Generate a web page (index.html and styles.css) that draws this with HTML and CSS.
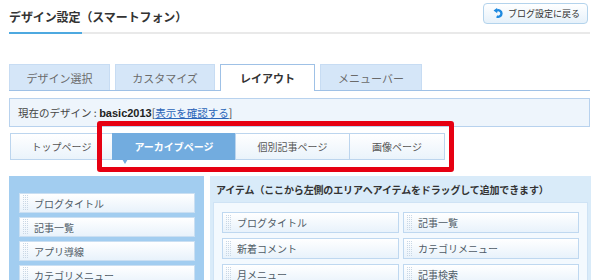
FILE: index.html
```html
<!DOCTYPE html>
<html lang="ja">
<head>
<meta charset="utf-8">
<title>デザイン設定（スマートフォン）</title>
<link rel="stylesheet" href="styles.css">
</head>
<body>
<div class="page">
  <header class="head">
    <h1 class="title">デザイン設定（スマートフォン）</h1>
    <a class="back-btn" href="#">
      <svg class="back-icon" viewBox="0 0 12 12" width="11" height="11" aria-hidden="true">
        <path d="M4 9.2 A3.6 3.6 0 1 0 4 2.8" fill="none" stroke="#1f8ae0" stroke-width="2.6"/>
        <path d="M0.6 2.8 L4.6 -0.2 L4.6 5.8 Z" fill="#1f8ae0"/>
      </svg>
      <span>ブログ設定に戻る</span>
    </a>
  </header>
  <div class="rule"><span class="rule-accent"></span></div>

  <nav class="tabs">
    <div class="tab tab-1">デザイン選択</div>
    <div class="tab tab-2">カスタマイズ</div>
    <div class="tab tab-3 is-active">レイアウト</div>
    <div class="tab tab-4">メニューバー</div>
  </nav>

  <div class="info">現在のデザイン<span class="info-colon"> : </span><b class="info-name">basic2013</b>[<a class="info-link" href="#">表示を確認する</a>]</div>

  <div class="subtabs">
    <div class="subtab sub-1">トップページ</div>
    <div class="subtab sub-2 is-active">アーカイブページ<span class="pointer"></span></div>
    <div class="subtab sub-3">個別記事ページ</div>
    <div class="subtab sub-4">画像ページ</div>
  </div>

  <div class="panels">
    <div class="left-panel">
      <div class="item"><span class="grip"></span>ブログタイトル</div>
      <div class="item"><span class="grip"></span>記事一覧</div>
      <div class="item"><span class="grip"></span>アプリ導線</div>
      <div class="item"><span class="grip"></span>カテゴリメニュー</div>
    </div>
    <div class="right-panel">
      <div class="rp-head">アイテム（ここから左側のエリアへアイテムをドラッグして追加できます）</div>
      <div class="rp-body">
        <div class="item item-r"><span class="grip"></span>ブログタイトル</div>
        <div class="item item-r"><span class="grip"></span>記事一覧</div>
        <div class="item item-r"><span class="grip"></span>新着コメント</div>
        <div class="item item-r"><span class="grip"></span>カテゴリメニュー</div>
        <div class="item item-r"><span class="grip"></span>月メニュー</div>
        <div class="item item-r"><span class="grip"></span>記事検索</div>
      </div>
    </div>
  </div>

  <div class="highlight"></div>
</div>
</body>
</html>
```

FILE: styles.css
```css
* { box-sizing: border-box; }

html, body {
  margin: 0;
  background: #fff;
}

body {
  font-family: "Noto Sans CJK JP", "Noto Sans", sans-serif;
  color: #333;
  overflow: hidden;
}

.page {
  position: relative;
  width: 600px;
  padding: 0 10px 0 9px;
}

/* header */
.head {
  display: flex;
  justify-content: space-between;
  align-items: flex-start;
  height: 32px;
}

.title {
  margin: 9px 0 0 0;
  font-size: 12px;
  line-height: 16px;
  font-weight: bold;
  color: #333;
  letter-spacing: -0.1px;
}

.back-btn {
  display: flex;
  align-items: center;
  gap: 4px;
  margin: 3px 2px 0 0;
  height: 21px;
  width: 105px;
  padding: 0 0 0 9px;
  border: 1px solid #b3d3ec;
  border-radius: 4px;
  background: linear-gradient(#ffffff, #e6f1fa);
  font-size: 9px;
  line-height: 12px;
  color: #333;
  text-decoration: none;
}

.back-icon { flex: none; }

.rule {
  height: 2px;
  background: #e9e9e9;
}

.rule-accent {
  display: block;
  width: 73px;
  height: 2px;
  background: #4ea9e0;
}

/* main tabs */
.tabs {
  display: flex;
  align-items: flex-end;
  gap: 5px;
  margin-top: 30px;
  height: 27px;
  border-bottom: 1px solid #9fc1e6;
}

.tab {
  height: 26px;
  display: flex;
  align-items: center;
  justify-content: center;
  font-size: 11px;
  line-height: 14px;
  color: #6a6a6a;
  background: #d5e6f8;
  border: 1px solid #c7dcf3;
  border-bottom: none;
}

.tab-1 { width: 101px; }
.tab-2 { width: 100px; }
.tab-3 { width: 95px; }
.tab-4 { width: 102px; }

.tab.is-active {
  height: 27px;
  margin-bottom: -1px;
  background: #fff;
  border-color: #9fc1e6;
  color: #333;
  font-weight: bold;
}

/* info */
.info {
  margin-top: 7px;
  height: 29px;
  display: flex;
  align-items: center;
  padding-left: 8px;
  background: #eef5fc;
  border: 1px solid #b8d2ee;
  font-size: 10.5px;
  line-height: 14px;
  color: #444;
  white-space: pre;
}

.info-name {
  font-family: "Liberation Sans", "Noto Sans CJK JP", sans-serif;
  font-weight: bold;
  color: #222;
  font-size: 11px;
}

.info-link {
  color: #2a64b8;
  text-decoration: underline;
}

/* sub tabs */
.subtabs {
  display: flex;
  margin-top: 6px;
  height: 27px;
}

.subtab {
  position: relative;
  height: 27px;
  display: flex;
  align-items: center;
  justify-content: center;
  font-size: 10px;
  line-height: 14px;
  color: #555;
  background: linear-gradient(#ffffff, #eaf3fb);
  border: 1px solid #bcd5ee;
  margin-left: -1px;
}

.sub-1 { width: 103px; margin-left: 1px; }
.sub-2 { width: 124px; }
.sub-3 { width: 115px; }
.sub-4 { width: 96px; }

.subtab.is-active {
  background: #72acdf;
  border-color: #72acdf;
  color: #fff;
  font-weight: bold;
}

.pointer {
  position: absolute;
  left: 9px;
  bottom: -5px;
  width: 0;
  height: 0;
  border-left: 3px solid transparent;
  border-right: 3px solid transparent;
  border-top: 5px solid #72acdf;
}

/* panels */
.panels {
  display: flex;
  gap: 6px;
  margin-top: 16px;
}

.left-panel {
  width: 195px;
  flex: none;
  height: 120px;
  background: #a2cdf0;
  padding: 17px 9px 0 10px;
  display: flex;
  flex-direction: column;
  gap: 4px;
}

.item {
  height: 20px;
  display: flex;
  align-items: center;
  padding-left: 2px;
  background: linear-gradient(#ffffff, #e8f2fb);
  border: 1px solid #cadff2;
  font-size: 10px;
  line-height: 13px;
  color: #4f5b66;
}

.grip {
  width: 6px;
  height: 16px;
  margin-right: 6px;
  flex: none;
  background-image: conic-gradient(#c9d7e5 0 25%, transparent 0 100%);
  background-size: 2px 2px;
}

.right-panel {
  flex: 1;
  height: 120px;
  background: #d9ebf9;
  padding: 0 3px;
}

.rp-head {
  height: 26px;
  display: flex;
  align-items: center;
  padding-left: 3px;
  font-size: 10px;
  line-height: 13px;
  font-weight: bold;
  color: #333;
  letter-spacing: -0.15px;
}

.rp-body {
  background: #f3f9fe;
  border: 1px solid #cfe3f5;
  height: 100px;
  padding: 9px 8px 0 8px;
  display: grid;
  grid-template-columns: 177px 176px;
  grid-auto-rows: 21px;
  column-gap: 4px;
  row-gap: 5px;
}

.item-r {
  height: 21px;
  border-color: #bfd8f0;
}

/* red highlight annotation */
.highlight {
  position: absolute;
  left: 97px;
  top: 121px;
  width: 357px;
  height: 51px;
  border: 5px solid #e60012;
  border-radius: 3px;
  pointer-events: none;
}
```
